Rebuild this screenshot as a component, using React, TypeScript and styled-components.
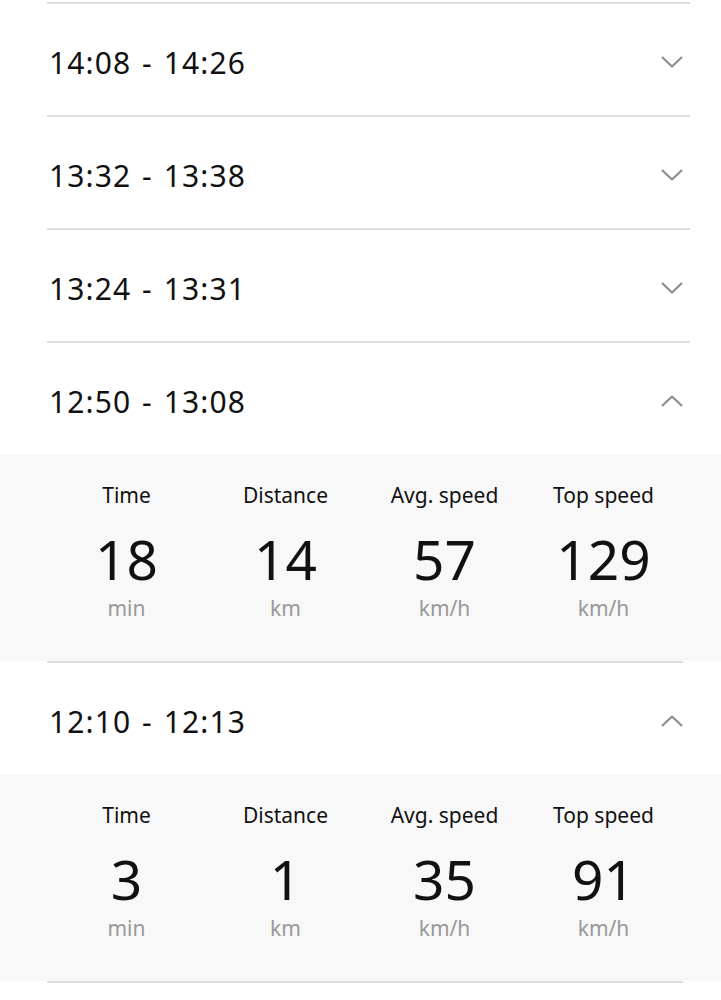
import React, { FC } from "react";
import styled, { createGlobalStyle } from "styled-components";

const GlobalStyle = createGlobalStyle`
  body {
    margin: 0;
    background: #ffffff;
    font-family: "Noto Sans", "Open Sans", sans-serif;
    color: #111;
  }
`;

interface Stat {
  label: string;
  value: string;
  unit: string;
}

interface Trip {
  range: string;
  stats?: Stat[];
}

const trips: Trip[] = [
  { range: "14:08 - 14:26" },
  { range: "13:32 - 13:38" },
  { range: "13:24 - 13:31" },
  {
    range: "12:50 - 13:08",
    stats: [
      { label: "Time", value: "18", unit: "min" },
      { label: "Distance", value: "14", unit: "km" },
      { label: "Avg. speed", value: "57", unit: "km/h" },
      { label: "Top speed", value: "129", unit: "km/h" },
    ],
  },
  {
    range: "12:10 - 12:13",
    stats: [
      { label: "Time", value: "3", unit: "min" },
      { label: "Distance", value: "1", unit: "km" },
      { label: "Avg. speed", value: "35", unit: "km/h" },
      { label: "Top speed", value: "91", unit: "km/h" },
    ],
  },
];

const Chevron: FC<{ up: boolean }> = ({ up }) => (
  <svg width="22" height="12" viewBox="0 0 22 12" fill="none">
    <path
      d={up ? "M1 11 L11 1.5 L21 11" : "M1 1 L11 10.5 L21 1"}
      stroke="#8a8a8a"
      strokeWidth="2"
      strokeLinejoin="round"
    />
  </svg>
);

const TripRow: FC<{ trip: Trip }> = ({ trip }) => {
  const open = !!trip.stats;
  return (
    <section>
      <Header>
        <Range>{trip.range}</Range>
        <Chevron up={open} />
      </Header>
      {open && (
        <Panel>
          {trip.stats!.map((s) => (
            <StatCell key={s.label}>
              <Label>{s.label}</Label>
              <Value>{s.value}</Value>
              <Unit>{s.unit}</Unit>
            </StatCell>
          ))}
        </Panel>
      )}
      <Divider $open={open} />
    </section>
  );
};

const App: FC = () => (
  <>
    <GlobalStyle />
    <List>
      <Divider $open={false} />
      {trips.map((t) => (
        <TripRow key={t.range} trip={t} />
      ))}
    </List>
  </>
);

export default App;

const List = styled.div`
  padding-top: 2px;
  width: 721px;
`;

const Divider = styled.div<{ $open: boolean }>`
  height: 2px;
  background: #dedede;
  margin: 0 ${(p) => (p.$open ? "38px" : "31px")} 0 47px;
`;

const Header = styled.div`
  height: 111px;
  box-sizing: border-box;
  display: flex;
  align-items: center;
  justify-content: space-between;
  padding: 5px 38px 0 49px;
`;

const Range = styled.div`
  font-size: 30px;
  letter-spacing: 1.1px;
  word-spacing: 2px;
  color: #111;
`;

const Panel = styled.div`
  background: #f8f8f8;
  display: grid;
  grid-template-columns: repeat(4, 1fr);
  padding: 27px 38px 39px 47px;
`;

const StatCell = styled.div`
  display: flex;
  flex-direction: column;
  align-items: center;
`;

const Label = styled.div`
  font-size: 21px;
  line-height: 28px;
  color: #111;
`;

const Value = styled.div`
  font-size: 55px;
  line-height: 60px;
  margin-top: 20px;
  color: #111;
`;

const Unit = styled.div`
  font-size: 21px;
  line-height: 28px;
  margin-top: 5px;
  color: #999;
`;
